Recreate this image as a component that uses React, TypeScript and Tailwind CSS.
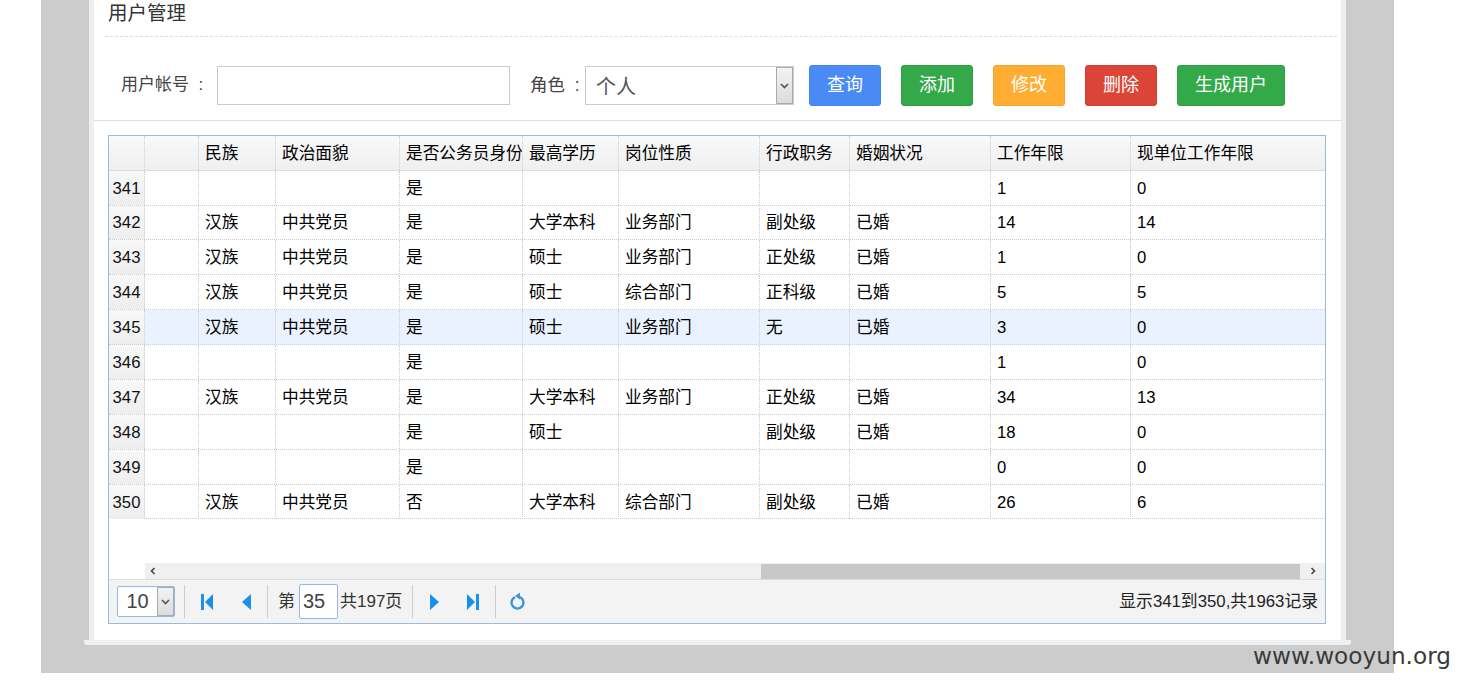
const font = "font-['Liberation_Sans','Noto_Sans_CJK_SC',sans-serif]";
const cols =
  "grid grid-cols-[36px_54px_77px_124px_123px_96px_141px_90px_141px_140px_194px]";

const headers = ["", "", "民族", "政治面貌", "是否公务员身份", "最高学历", "岗位性质", "行政职务", "婚姻状况", "工作年限", "现单位工作年限"];

const rows = [
  ["341", "", "", "", "是", "", "", "", "", "1", "0"],
  ["342", "", "汉族", "中共党员", "是", "大学本科", "业务部门", "副处级", "已婚", "14", "14"],
  ["343", "", "汉族", "中共党员", "是", "硕士", "业务部门", "正处级", "已婚", "1", "0"],
  ["344", "", "汉族", "中共党员", "是", "硕士", "综合部门", "正科级", "已婚", "5", "5"],
  ["345", "", "汉族", "中共党员", "是", "硕士", "业务部门", "无", "已婚", "3", "0"],
  ["346", "", "", "", "是", "", "", "", "", "1", "0"],
  ["347", "", "汉族", "中共党员", "是", "大学本科", "业务部门", "正处级", "已婚", "34", "13"],
  ["348", "", "", "", "是", "硕士", "", "副处级", "已婚", "18", "0"],
  ["349", "", "", "", "是", "", "", "", "", "0", "0"],
  ["350", "", "汉族", "中共党员", "否", "大学本科", "综合部门", "副处级", "已婚", "26", "6"],
];

const buttons = [
  { label: "查询", cls: "w-[72px] bg-[#4a8af4] border-[#4285f4]" },
  { label: "添加", cls: "w-[72px] bg-[#34a94a] border-[#2f9e44]" },
  { label: "修改", cls: "w-[72px] bg-[#ffad33] border-[#f5a42c]" },
  { label: "删除", cls: "w-[72px] bg-[#db4437] border-[#cf3f33]" },
  { label: "生成用户", cls: "w-[108px] bg-[#34a94a] border-[#2f9e44]" },
];

function SelectArrow({ className }: { className: string }) {
  return (
    <span className={`flex items-center justify-center border border-[#aaa] bg-gradient-to-b from-[#f3f3f3] to-[#dcdcdc] ${className}`}>
      <svg width="9" height="6" viewBox="0 0 9 6">
        <path d="M1 1l3.5 3.5L8 1" fill="none" stroke="#555" strokeWidth="1.7" />
      </svg>
    </span>
  );
}

function PagerIcon({ d }: { d: string }) {
  return (
    <svg width="16" height="18" viewBox="0 0 16 18" fill="#1a90e8">
      <path d={d} />
    </svg>
  );
}

function Sep({ className }: { className: string }) {
  return <span className={`h-[33px] w-px shrink-0 bg-[#ccc] ${className}`} />;
}

export default function App() {
  return (
    <div className={`${font} relative h-[685px] w-[1459px] overflow-hidden bg-white`}>
      <div className="ml-[41px] h-[673px] w-[1353px] bg-[#cccccc] pl-[48px]">
        <div className="h-[640px] w-[1257px] border-x-[5px] border-[#ebeff2] bg-white">
          <div className="h-[37px] pl-[11px] pr-[4px]">
            <div className="h-[37px] border-b border-dashed border-[#ddd] pl-[3px] text-[19.5px] leading-[26px] text-[#333]">
              用户管理
            </div>
          </div>

          <div className="flex h-[84px] items-start border-b border-[#ddd] pt-[28px]">
            <label className="ml-[27px] w-[96px] whitespace-pre pt-[8px] text-[17px] leading-[24px] text-[#444]">用户帐号  :</label>
            <input className="mt-px h-[39px] w-[293px] border border-[#ccc] bg-white" readOnly />
            <label className="ml-[20px] w-[55px] whitespace-pre pt-[8px] text-[17.5px] leading-[24px] text-[#444]">角色  :</label>
            <div className="mt-px flex h-[39px] w-[209px] border border-[#ccc] bg-white">
              <span className="flex-1 pl-[10px] pt-px text-[20px] leading-[38px] text-[#555]">个人</span>
              <SelectArrow className="w-[17px]" />
            </div>
            <div className="ml-[15px] flex gap-[20px]">
              {buttons.map((b) => (
                <button key={b.label} className={`h-[41px] rounded-[3px] border text-[18px] text-white ${b.cls}`}>
                  {b.label}
                </button>
              ))}
            </div>
          </div>

          <div className="ml-[14px] mt-[14px] flex h-[489px] w-[1218px] flex-col border border-[#9db9e3]">
            <div className={`${cols} h-[35px] border-b border-[#ddd] bg-gradient-to-b from-[#f9f9f9] to-[#efefef]`}>
              {headers.map((h, i) => (
                <div key={i} className="overflow-hidden whitespace-nowrap border-r border-dotted border-[#ccc] pl-[6px] pt-[2px] text-[16.7px] leading-[32px] text-black last:border-r-0">
                  {h}
                </div>
              ))}
            </div>

            <div className="flex-1">
              {rows.map((row) => (
                <div
                  key={row[0]}
                  className={`${cols} ${row[0] === "342" || row[0] === "350" ? "h-[34px]" : "h-[35px]"} border-b border-dotted border-[#ccc] ${row[0] === "345" ? "bg-[#eaf2ff]" : ""}`}
                >
                  {row.map((c, i) => (
                    <div
                      key={i}
                      className={
                        i === 0
                          ? `border-r border-dotted border-[#ccc] bg-gradient-to-b from-[#f8f8f8] to-[#eeeeee] text-center text-[16.7px] leading-[33px] text-[#111] ${row[0] === "342" ? "" : "pt-px"}`
                          : `border-r border-dotted border-[#ccc] pl-[6px] text-[16.7px] leading-[33px] text-black last:border-r-0 ${row[0] === "342" ? "" : "pt-px"}`
                      }
                    >
                      {c}
                    </div>
                  ))}
                </div>
              ))}
            </div>

            <div className="ml-[36px] flex h-[16px] items-center bg-[#f0f0f0]">
              <div className="flex w-[616px] items-center pl-[5px]">
                <svg width="6" height="8" viewBox="0 0 6 8">
                  <path d="M4.5 1L1.5 4l3 3" fill="none" stroke="#444" strokeWidth="1.6" />
                </svg>
              </div>
              <div className="h-[15px] w-[539px] bg-[#c8c8c8]" />
              <div className="flex flex-1 items-center justify-center">
                <svg width="6" height="8" viewBox="0 0 6 8">
                  <path d="M1.5 1l3 3-3 3" fill="none" stroke="#444" strokeWidth="1.6" />
                </svg>
              </div>
            </div>

            <div className="flex h-[44px] items-center border-t border-[#ddd] bg-[#f3f3f3] pl-[8px] pr-[7px] text-[17px] text-[#333]">
              <div className="flex h-[31px] w-[58px] rounded-[2px] border border-[#94b8e8] bg-white">
                <span className="flex-1 text-center text-[20px] leading-[29px] text-[#444]">10</span>
                <SelectArrow className="w-[17px]" />
              </div>
              <Sep className="ml-[9px]" />
              <div className="ml-[15px] flex items-center gap-[23px]">
                <PagerIcon d="M1 1h3v16H1zM13 1v16L5 9z" />
                <PagerIcon d="M12 1v16L3 9z" />
              </div>
              <Sep className="ml-[12px]" />
              <span className="ml-[10px] w-[21px]">第</span>
              <span className="h-[35px] w-[39px] rounded-[2px] border border-[#94b8e8] bg-white pl-[3px] text-[20px] leading-[32px] text-[#444]">35</span>
              <span className="ml-[2px] whitespace-nowrap">共197页</span>
              <Sep className="ml-[10px]" />
              <div className="ml-[14px] flex items-center gap-[23px]">
                <PagerIcon d="M3 1v16l9-8z" />
                <PagerIcon d="M1 1v16l8-8zM10 1h3v16h-3z" />
              </div>
              <Sep className="ml-[13px]" />
              <span className="ml-[13px] flex items-center">
                <svg width="18" height="20" viewBox="0 0 18 20" fill="none">
                  <path d="M6 5.2a6 6 0 1 0 5 0" stroke="#3a94d8" strokeWidth="2.4" />
                  <path d="M11 .5v7L6 4z" fill="#3a94d8" />
                </svg>
              </span>
              <span className="ml-auto whitespace-nowrap text-[16.8px] text-[#222]">显示341到350,共1963记录</span>
            </div>
          </div>
        </div>
        <div className="relative -ml-[5px] h-[5px] w-[1267px] rounded-b-[3px] bg-[#eef1f2]" />
      </div>

      <div className="absolute left-[1253px] top-[640px] font-['DejaVu_Sans',sans-serif] text-[23.2px] leading-[32px] text-[#3a3a3a]">
        www.wooyun.org
      </div>
    </div>
  );
}
